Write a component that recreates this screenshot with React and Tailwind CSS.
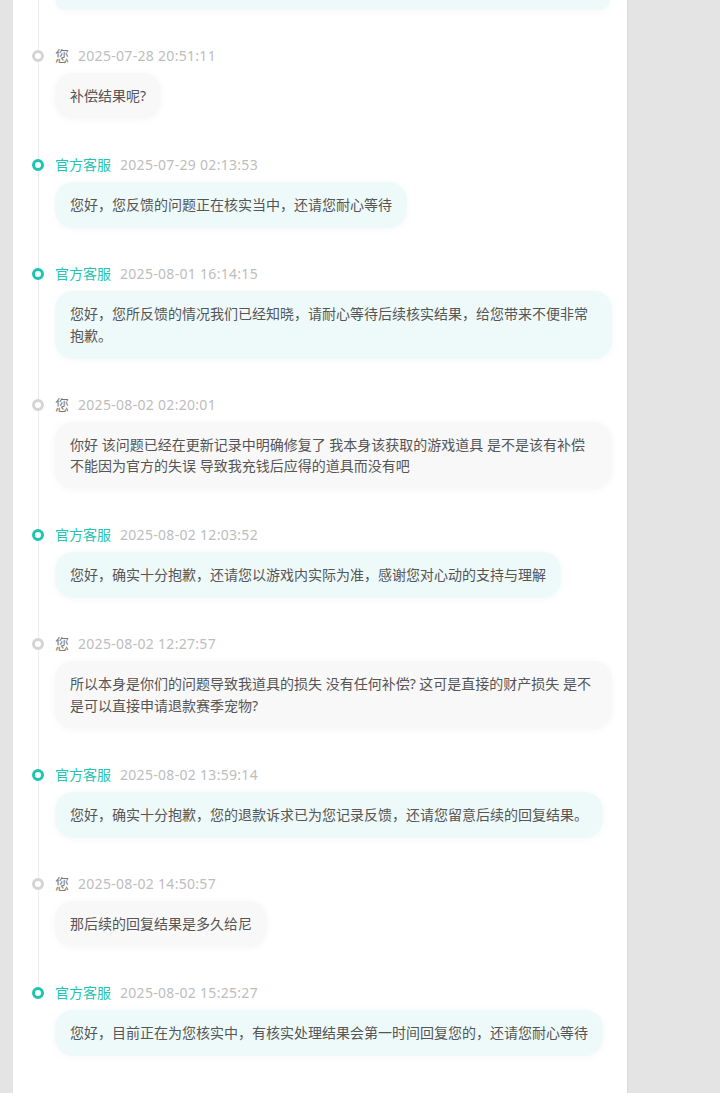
import React from 'react';

const messages = [
  { from: 'user', time: '2025-07-28 20:51:11', text: '补偿结果呢?' },
  { from: 'staff', time: '2025-07-29 02:13:53', text: '您好，您反馈的问题正在核实当中，还请您耐心等待' },
  { from: 'staff', time: '2025-08-01 16:14:15', text: '您好，您所反馈的情况我们已经知晓，请耐心等待后续核实结果，给您带来不便非常抱歉。' },
  { from: 'user', time: '2025-08-02 02:20:01', text: '你好 该问题已经在更新记录中明确修复了 我本身该获取的游戏道具 是不是该有补偿 不能因为官方的失误 导致我充钱后应得的道具而没有吧' },
  { from: 'staff', time: '2025-08-02 12:03:52', text: '您好，确实十分抱歉，还请您以游戏内实际为准，感谢您对心动的支持与理解' },
  { from: 'user', time: '2025-08-02 12:27:57', text: '所以本身是你们的问题导致我道具的损失 没有任何补偿? 这可是直接的财产损失 是不是可以直接申请退款赛季宠物?' },
  { from: 'staff', time: '2025-08-02 13:59:14', text: '您好，确实十分抱歉，您的退款诉求已为您记录反馈，还请您留意后续的回复结果。' },
  { from: 'user', time: '2025-08-02 14:50:57', text: '那后续的回复结果是多久给尼' },
  { from: 'staff', time: '2025-08-02 15:25:27', text: '您好，目前正在为您核实中，有核实处理结果会第一时间回复您的，还请您耐心等待' },
];

const Dot = ({ staff }) => (
  <div
    className={`w-[12px] h-[12px] rounded-full border-[3.5px] bg-white ${
      staff ? 'border-[#1cc4b2]' : 'border-[#d4d4d4]'
    }`}
  />
);

const Item = ({ msg, last }) => {
  const staff = msg.from === 'staff';
  return (
    <div className="relative flex pt-[36px] pl-[19px]">
      {/* connector line */}
      <div className="absolute left-[25px] top-0 w-px bg-[#ececec]" style={{ bottom: last ? 'auto' : 0, height: last ? 46 : undefined }} />
      <div className="relative w-[12px] shrink-0 pt-[4px]">
        <Dot staff={staff} />
      </div>
      <div className="ml-[11px] flex flex-col items-start min-w-0">
        <div className="h-[20px] flex items-center text-[14px] leading-[20px]">
          <span className={staff ? 'text-[#22c3b3]' : 'text-[#777]'}>{staff ? '官方客服' : '您'}</span>
          <span className="ml-[9px] text-[#bdbdbd] tracking-[0.3px]">{msg.time}</span>
        </div>
        <div
          className={`mt-[7px] max-w-[557px] rounded-[18px] px-[15px] py-[12.25px] text-[14px] leading-[21.5px] text-[#555] shadow-[0_1px_8px_rgba(0,0,0,0.035)] ${
            staff ? 'bg-[#eefafa]' : 'bg-[#f8f8f8]'
          }`}
        >
          {msg.text}
        </div>
      </div>
    </div>
  );
};

export default function App() {
  return (
    <div
      className="min-h-screen bg-[#e4e4e4] flex"
      style={{ fontFamily: '"Noto Sans", "Noto Sans CJK SC", sans-serif' }}
    >
      <div className="ml-[13px] w-[615px] bg-white border-r border-[#d9d9d9] min-h-screen pb-[40px]">
        {/* tail of previous message */}
        <div className="relative pl-[19px] flex">
          <div className="absolute left-[25px] top-0 bottom-0 w-px bg-[#ececec]" />
          <div className="w-[12px] shrink-0" />
          <div className="ml-[11px] w-[555px] h-[10px] rounded-b-[18px] bg-[#eefafa] shadow-[0_1px_8px_rgba(0,0,0,0.035)]" />
        </div>
        {messages.map((m, i) => (
          <Item key={i} msg={m} last={i === messages.length - 1} />
        ))}
      </div>
    </div>
  );
}
